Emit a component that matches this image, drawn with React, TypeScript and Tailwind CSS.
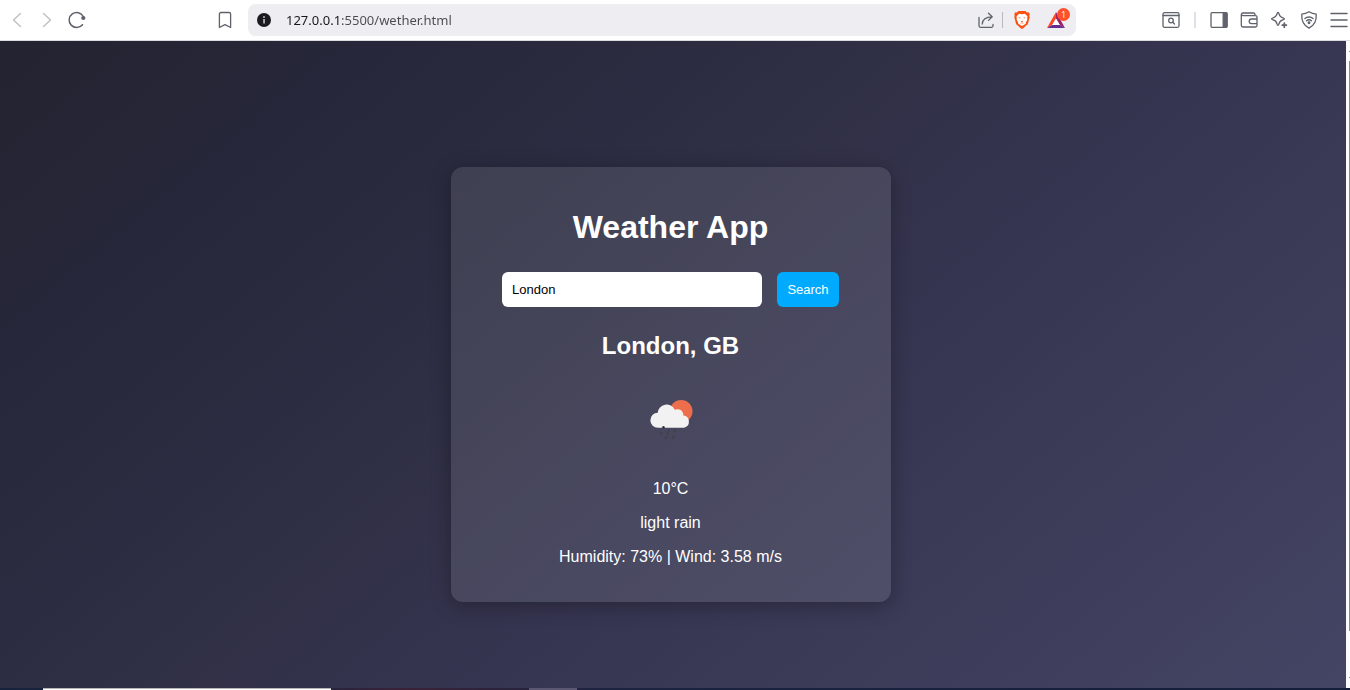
import { useState } from "react";
import type { ReactNode } from "react";

function Icon({ children }: { children: ReactNode }) {
  return (
    <svg
      className="size-[18px] shrink-0"
      viewBox="0 0 18 18"
      fill="none"
      stroke="currentColor"
      strokeWidth="1.3"
      strokeLinecap="round"
      strokeLinejoin="round"
      aria-hidden="true"
    >
      {children}
    </svg>
  );
}

function ToolButton({ label, children, disabled }: { label: string; children: ReactNode; disabled?: boolean }) {
  return (
    <button
      type="button"
      aria-label={label}
      disabled={disabled}
      className="shrink-0 text-[#5f626b] disabled:text-[#bcbcc2]"
    >
      <Icon>{children}</Icon>
    </button>
  );
}

function BraveLogo() {
  return (
    <svg className="h-[18px] w-4" viewBox="0 0 16 18" aria-hidden="true">
      <path
        d="M4.500 0h7l1.500 1.400 1.600-.1 1.200 2-.5 1.400.4 1.600-1.700 6.200c-.2.700-.6 1.200-1.200 1.600L9 17.500c-.6.400-1.400.4-2 0l-3.800-3.400c-.6-.4-1-.9-1.200-1.600L.3 6.300.7 4.700.2 3.300l1.200-2 1.600.1z"
        fill="#fb5010"
      />
      <path
        d="M5 2.700l3 .5 3-.5 2.500 2.700-.3 1.600.1 1.800-1.300 2.500-.3 1.500-1.500.9L8 15l-2.200-1.300-1.500-.9-.3-1.500-1.300-2.500.1-1.800-.3-1.600z"
        fill="#fff"
      />
      <path
        d="M4.600 6.300l2 .4-.5.800-1.200-.4zM11.400 6.300l-2 .4.500.8 1.200-.4zM6.700 9.500L8 10.600l1.300-1.100-.5 1.600h-1.600z"
        fill="#fb5010"
      />
      <path d="M6.500 12.300L8 11.800l1.500.5" fill="none" stroke="#fb5010" strokeWidth=".6" />
    </svg>
  );
}

function RewardsLogo() {
  return (
    <svg className="h-5 w-[18px]" viewBox="0 0 18 20" aria-hidden="true">
      <path d="M9 2L0 18l5.200-3L9 8.500z" fill="#ff4724" />
      <path d="M9 2l9 16-5.200-3L9 8.500z" fill="#9e1f63" />
      <path d="M0 18h18l-5.200-3H5.200z" fill="#662d91" />
      <path d="M9 8.500L5.200 15h7.600z" fill="#fff" />
    </svg>
  );
}

function BrowserBar() {
  const [url, setUrl] = useState("127.0.0.1:5500/wether.html");
  return (
    <header className="flex h-[41px] items-center border-b border-[#dcdce0] bg-white pr-[2px] pl-2">
      <nav aria-label="Browser" className="flex w-60 shrink-0 items-center gap-3">
        <ToolButton label="Back" disabled>
          <path d="M12.500 2.500L5.500 9l7 6.500" />
        </ToolButton>
        <ToolButton label="Forward" disabled>
          <path d="M5.500 2.500l7 6.500-7 6.500" />
        </ToolButton>
        <ToolButton label="Reload">
          <path d="M14.500 13.700A7.500 7.500 0 1 1 15.300 5.500" strokeWidth="1.500" />
          <circle cx="15.300" cy="7" r="2.100" fill="currentColor" stroke="none" />
        </ToolButton>
        <div className="mr-3.5 ml-auto flex">
          <ToolButton label="Bookmark this page">
            <path d="M3.400 3a1.500 1.500 0 0 1 1.500-1.500h8.200A1.500 1.500 0 0 1 14.600 3v13.500L9 13.700l-5.600 2.800z" />
          </ToolButton>
        </div>
      </nav>

      <div className="flex h-8 min-w-0 flex-1 items-center rounded-lg bg-[#ededf2] pr-[11px] pl-[9px]">
        <button type="button" aria-label="Site information" className="shrink-0">
          <svg className="size-3.5" viewBox="0 0 14 14" aria-hidden="true">
            <circle cx="7" cy="7" r="7" fill="#1b1b20" />
            <rect x="6.200" y="6" width="1.700" height="4.500" fill="#b8b8bc" />
            <circle cx="7" cy="4" r="1" fill="#b8b8bc" />
          </svg>
        </button>
        <input
          aria-label="Address"
          value={url}
          onChange={(e) => setUrl(e.target.value)}
          spellCheck={false}
          className="ml-[15px] min-w-0 flex-1 bg-[linear-gradient(to_right,#18181c_54px,#4a4a50_54px)] bg-clip-text font-['Noto_Sans',sans-serif] text-[13px] leading-5 text-transparent caret-black outline-none"
        />
        <div className="flex items-center">
          <ToolButton label="Share">
            <path d="M2 6.500v8.300a1.500 1.500 0 0 0 1.500 1.500h11a1.500 1.500 0 0 0 1.500-1.500v-1.300M5.200 13c.3-4.200 2.500-7.200 9.800-7.200M11.500 2.200L15.200 5.800l-3.700 3.600" />
          </ToolButton>
          <span className="mr-[11px] ml-[7px] h-4 w-px bg-[#b8b8c0]" />
          <button type="button" aria-label="Brave Shields">
            <BraveLogo />
          </button>
          <button type="button" aria-label="Brave Rewards" className="relative ml-[17px]">
            <RewardsLogo />
            <span className="absolute -top-[2px] -right-[5px] flex size-[13px] items-center justify-center rounded-full bg-[#ff4f2b] font-['Open_Sans',sans-serif] text-[9px] leading-3 text-white">
              1
            </span>
          </button>
        </div>
      </div>

      <div className="flex w-[272px] shrink-0 items-center justify-end gap-3">
        <ToolButton label="Search tabs">
          <rect x="1" y="1.700" width="16" height="14.600" rx="1.500" />
          <path d="M1 4.500h16" />
          <circle cx="9" cy="9.500" r="2.300" />
          <path d="M10.800 11.300l1.700 1.700" />
        </ToolButton>
        <span className="mx-[2px] h-4 w-[2px] bg-[#e0e0e6]" />
        <ToolButton label="Side panel">
          <rect x="1" y="1.700" width="16" height="14.600" rx="1" />
          <path d="M13.200 1.700H16a1 1 0 0 1 1 1v12.600a1 1 0 0 1-1 1h-2.800z" fill="currentColor" />
        </ToolButton>
        <ToolButton label="Wallet">
          <path d="M15 4.500v-1A1.500 1.500 0 0 0 13.500 2H2.800a1.300 1.300 0 0 0 0 2.600h12.700A1.500 1.500 0 0 1 17 6.100v8.400a1.500 1.500 0 0 1-1.500 1.500H3a1.700 1.700 0 0 1-1.700-1.700V3.500M17 8h-5.500a2.300 2.300 0 0 0 0 4.600H17" />
        </ToolButton>
        <ToolButton label="Leo AI">
          <path d="M8 1.500c.5 0 .8.500 1 1.400.6 2.500 1.400 3.300 3.900 3.900 2 .5 2 1.600 0 2.100-2.500.6-3.300 1.400-3.900 3.900-.5 2-1.500 2-2 0C6.400 10.300 5.600 9.500 3.100 8.900c-2-.5-2-1.600 0-2.100C5.600 6.200 6.400 5.400 7 2.900c.2-.9.500-1.400 1-1.400z" />
          <path d="M14.300 12v4.200M12.200 14.100h4.200" strokeWidth="1.700" />
        </ToolButton>
        <ToolButton label="VPN">
          <path d="M9 .8c2 1.300 4.300 2.200 7.200 2.300.5 6.600-1.300 11-7.200 14.100C3.100 14.100 1.300 9.700 1.800 3.100 4.700 3 7 2.100 9 .8z" />
          <path d="M4.900 7.500c2.300-2 5.900-2 8.200 0M6.500 9.800c1.400-1.200 3.600-1.200 5 0" />
          <circle cx="9" cy="11.700" r=".8" fill="currentColor" />
        </ToolButton>
        <ToolButton label="Menu">
          <path d="M1 2.500h16M1 9h16M1 15.500h16" strokeWidth="1.500" />
        </ToolButton>
      </div>
    </header>
  );
}

function LightRainIcon() {
  return (
    <svg className="size-[100px]" viewBox="0 0 100 100" role="img" aria-label="Light rain">
      <circle cx="60.200" cy="46.300" r="11.300" fill="#ec6e4c" />
      <path
        d="M37 62.800a7.500 7.500 0 0 1-.3-15 8.900 8.900 0 0 1 17-3 6 6 0 0 1 8.700 5.600 6.300 6.300 0 0 1 .6 12.400z"
        fill="#f2f2f2"
      />
      <circle cx="42.500" cy="62.200" r="1.200" fill="#2e2e33" />
      <path
        d="M40.200 67.800l-.7 1.300M48 66l-1.500 3M54 65.300l-.8 1.500M45.300 71.800l-.8 1.500M52.800 71l-1 2.300"
        stroke="#424248"
        strokeWidth="1.800"
        strokeLinecap="round"
      />
    </svg>
  );
}

function WeatherCard() {
  const [city, setCity] = useState("London");
  return (
    <section className="w-[440px] max-w-full rounded-xl bg-white/10 px-5 pt-10 pb-9 text-center text-white shadow-[0_4px_20px_rgba(0,0,0,0.3)]">
      <h1 className="text-[32px] leading-10 font-bold">Weather App</h1>
      <form className="mt-[25px] flex justify-center gap-[15px]" onSubmit={(e) => e.preventDefault()}>
        <input
          aria-label="City"
          value={city}
          onChange={(e) => setCity(e.target.value)}
          className="h-[35px] w-[260px] min-w-0 rounded-md bg-white px-2.5 text-[13px] text-black outline-none"
        />
        <button type="submit" className="h-[35px] w-[62px] rounded-md bg-[#00aaff] text-[13px] text-white">
          Search
        </button>
      </form>
      <h2 className="mt-[25px] text-2xl leading-7 font-bold">London, GB</h2>
      <div className="mt-[5px] flex justify-center">
        <LightRainIcon />
      </div>
      <div className="mt-[15px] flex flex-col gap-4 text-base leading-[18px]">
        <p>10°C</p>
        <p>light rain</p>
        <p>Humidity: 73% | Wind: 3.58 m/s</p>
      </div>
    </section>
  );
}

export default function App() {
  return (
    <div className="flex min-h-screen flex-col bg-white font-['Liberation_Sans',Arial,sans-serif]">
      <BrowserBar />
      <div className="flex flex-1">
        <main className="flex flex-1 items-center justify-center bg-linear-[140deg,#242330,#26273a_18%,#2f2f45_42%,#35344f_56%,#444464] pt-10 pr-[5px]">
          <WeatherCard />
        </main>
        <div className="flex w-1 flex-col items-end bg-[#fcfcfc] py-2.5">
          <span className="h-px w-px bg-[#8a8a8a]" />
          <span className="mt-[9px] mb-[46px] w-px flex-1 bg-[#8a8a8a]" />
          <span className="h-px w-px bg-[#8a8a8a]" />
        </div>
      </div>
      <footer className="flex h-[2px] bg-[linear-gradient(to_right,#16223c,#1b2340_20%,#3a2238_30%,#1b2340_45%,#141f3c)]">
        <span className="ml-[43px] w-72 border-t border-[#b5b5b5] bg-white" />
        <span className="ml-[198px] w-12 bg-[#5b5672]" />
      </footer>
    </div>
  );
}
